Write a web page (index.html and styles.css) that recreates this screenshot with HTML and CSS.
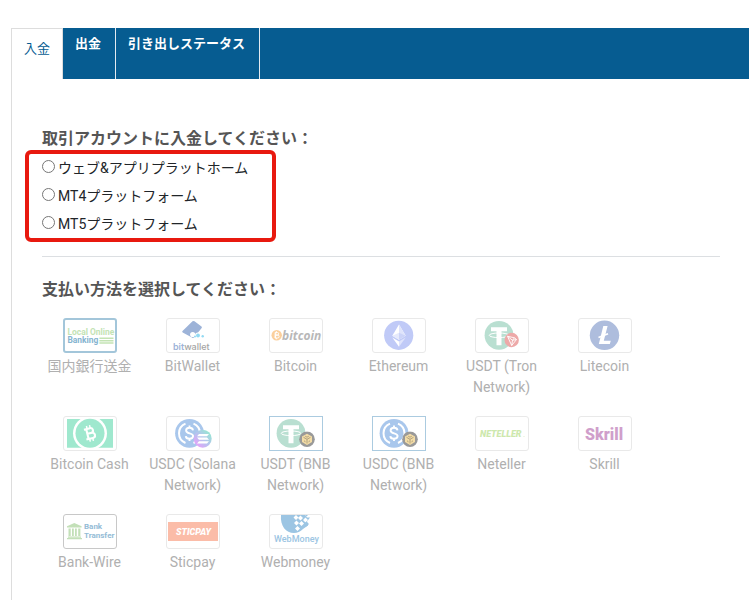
FILE: index.html
```html
<!DOCTYPE html>
<html lang="ja">
<head>
<meta charset="utf-8">
<meta name="viewport" content="width=device-width, initial-scale=1">
<title>入金</title>
<link rel="stylesheet" href="styles.css">
</head>
<body>
<svg class="defs" aria-hidden="true">
  <defs>
    <linearGradient id="sol" x1="0" y1="1" x2="1" y2="0"><stop offset="0.1" stop-color="#e9a0fb"/><stop offset="0.5" stop-color="#b5c3ee"/><stop offset="0.9" stop-color="#95ead0"/></linearGradient>
    <symbol id="tether" viewBox="0 0 30 30">
      <circle cx="15" cy="15" r="14.4" fill="#b9dfd1"/>
      <path d="M7 7h16v4h-5.500v14h-5V11H7z" fill="#fff"/>
      <ellipse cx="15" cy="15" rx="9.800" ry="2.300" fill="none" stroke="#fff" stroke-width="1"/>
    </symbol>
    <symbol id="usdc" viewBox="0 0 30 30">
      <circle cx="15" cy="15" r="14.4" fill="#a9c7ec"/>
      <path d="M11 5.300a10.500 10.500 0 0 0 0 19.400M19 5.300a10.500 10.500 0 0 1 0 19.400" fill="none" stroke="#fff" stroke-width="2"/>
      <path d="M18.500 12c-.3-1.800-1.700-2.500-3.500-2.500-2 0-3.400 1-3.400 2.600 0 3.800 7 2 7 5.700 0 1.700-1.500 2.700-3.600 2.700s-3.600-.9-3.700-2.700M15 7.200v2.300M15 20.500v2.300" fill="none" stroke="#fff" stroke-width="1.900"/>
    </symbol>
    <symbol id="bnb" viewBox="0 0 16 16">
      <circle cx="8" cy="8" r="7.800" fill="#999"/>
      <path d="M8 2.400l5 2.800v5.600l-5 2.800-5-2.800V5.200z" fill="#f3dca6"/>
      <path d="M4.500 6L8 8l3.500-2M8 8v4.200M5 9.500l1.500 1M11 9.500l-1.500 1M6.200 4.900L8 5.900l1.800-1" fill="none" stroke="#a99a78" stroke-width=".9"/>
    </symbol>
  </defs>
</svg>

<nav class="tabs">
  <a class="tab tab-active" href="#deposit" aria-current="page">入金</a>
  <a class="tab" href="#withdraw">出金</a>
  <a class="tab" href="#status">引き出しステータス</a>
</nav>

<main class="panel" id="deposit">
  <h2 class="title" id="account-title">取引アカウントに入金してください：</h2>
  <div class="platforms" role="radiogroup" aria-labelledby="account-title">
    <label class="platform"><input class="radio" type="radio" name="platform">ウェブ&amp;アプリプラットホーム</label>
    <label class="platform"><input class="radio" type="radio" name="platform">MT4プラットフォーム</label>
    <label class="platform"><input class="radio" type="radio" name="platform">MT5プラットフォーム</label>
  </div>
  <hr class="divider">
  <h2 class="title">支払い方法を選択してください：</h2>
  <div class="methods">
    <button class="method" type="button">
      <svg class="logo logo-blue" viewBox="1 1 52 33" aria-hidden="true">
        <text class="lt-roboto" x="3" y="17" font-size="9" font-weight="700" fill="#c3e3b4">Local Online</text>
        <text class="lt-roboto" x="3" y="26" font-size="9" font-weight="700" fill="#85b4d0">Banking</text>
        <path d="M37 20.500h15M37 23h15M37 25.500h15" stroke="#c3e3b4" stroke-width="1.600"/>
      </svg>
      <span>国内銀行送金</span>
    </button>
    <button class="method" type="button">
      <svg class="logo" viewBox="1 1 52 33" aria-hidden="true">
        <path d="M26.500 3.300q1-.8 2 0l7 5.200q.8.700.2 1.500l-7.800 9.500q-.7.700-1.500.2L16.700 14.400q-1-.7-.2-1.500z" fill="#9db3d8"/>
        <circle cx="26.700" cy="16.500" r="2.600" fill="#fff"/><circle cx="32" cy="17.500" r="3" fill="#fff"/>
        <circle cx="32" cy="17.500" r="1.900" fill="#93daf3"/><circle cx="36.700" cy="18.200" r="1.200" fill="#93daf3"/><circle cx="29" cy="18.500" r="1" fill="#93daf3"/>
        <text class="lt-inter" x="7" y="32" font-size="9" font-weight="600" fill="#9db3d8">bit<tspan font-weight="500" fill="#a5a5a5">wallet</tspan></text>
      </svg>
      <span>BitWallet</span>
    </button>
    <button class="method" type="button">
      <svg class="logo" viewBox="1 1 52 33" aria-hidden="true">
        <circle cx="7.700" cy="17.300" r="5.200" fill="#fbcf9c"/>
        <path d="M6.200 14.500h2.200a1.300 1.300 0 0 1 0 2.600H6.500h2.200a1.400 1.400 0 0 1 0 2.900H6zM6.900 14.500L6.400 20M7.400 13.200v1.300M7.300 20v1.300" fill="none" stroke="#fff" stroke-width="1"/>
        <text class="lt-open" x="13" y="22" font-size="12" font-weight="700" font-style="italic" fill="#b8b8b8">bitcoin</text>
      </svg>
      <span>Bitcoin</span>
    </button>
    <button class="method" type="button">
      <svg class="logo" viewBox="1 1 52 33" aria-hidden="true">
        <circle cx="26.700" cy="17.300" r="14.600" fill="#c0caf7"/>
        <path d="M27 6.500l6.700 11.300L27 21.800l-6.700-4z" fill="#fff"/><path d="M27 6.500l6.700 11.300L27 21.800z" fill="#dfe4fb"/><path d="M27 14.800l6.700 3L27 21.800z" fill="#ccd4f8"/><path d="M27 14.800l-6.700 3 6.700 4z" fill="#e6eafc"/>
        <path d="M20.300 19.500l6.700 4v5.300z" fill="#fff"/><path d="M33.700 19.500l-6.700 4v5.300z" fill="#dfe4fb"/>
      </svg>
      <span>Ethereum</span>
    </button>
    <button class="method" type="button">
      <svg class="logo" viewBox="1 1 52 33" aria-hidden="true">
        <use href="#tether" x="9" y="2.300" width="30" height="30"/>
        <circle cx="36.700" cy="22" r="7.200" fill="#eda9a8"/>
        <path d="M32.500 18.300l7 1.500 2 1.700-4.800 6zM32.500 18.300l5 4 4-.8M37.500 22.300l2-2.500M37.500 22.300l-.8 5.200" fill="none" stroke="#fff" stroke-width=".9" stroke-linejoin="round"/>
      </svg>
      <span>USDT (Tron Network)</span>
    </button>
    <button class="method" type="button">
      <svg class="logo" viewBox="1 1 52 33" aria-hidden="true">
        <circle cx="26.500" cy="17.300" r="14.700" fill="#aebddd"/>
        <path d="M25.300 8h4.300l-3.800 14.700h7l-1 3.300H20.800z" fill="#fff"/>
        <path d="M20.500 19.500l9.500-3.800" stroke="#fff" stroke-width="1.700"/>
      </svg>
      <span>Litecoin</span>
    </button>
    <button class="method" type="button">
      <svg class="logo" viewBox="1 1 52 33" aria-hidden="true">
        <path d="M4 3h46v28.700H4z" fill="#9fe8ce"/><circle cx="27" cy="17.300" r="17" fill="#fff"/><circle cx="27" cy="17.300" r="14.500" fill="#9fe8ce"/>
        <g transform="rotate(-14 27 17.300)" fill="none" stroke="#fff" stroke-width="2.100"><path d="M22 12.300h6.200a2.400 2.400 0 0 1 0 4.900H24.500h4.300a2.600 2.600 0 0 1 0 5.300H22M24.300 12.300v10.200"/><path d="M25.300 9.300v3M28.500 9.300v3M25.300 22.500v3M28.500 22.500v3" stroke-width="1.500"/></g>
      </svg>
      <span>Bitcoin Cash</span>
    </button>
    <button class="method" type="button">
      <svg class="logo" viewBox="1 1 52 33" aria-hidden="true">
        <use href="#usdc" x="8.500" y="2.300" width="30" height="30"/>
        <circle cx="36.700" cy="22.700" r="9" fill="url(#sol)"/>
        <path d="M33 18h10l-2 2.300H31zM31 21.500h10l2 2.300H33zM33 25.200h10l-2 2.300H31z" fill="#fff"/>
      </svg>
      <span>USDC (Solana Network)</span>
    </button>
    <button class="method" type="button">
      <svg class="logo logo-pale" viewBox="1 1 52 33" aria-hidden="true">
        <use href="#tether" x="7" y="2.300" width="30" height="30"/><use href="#bnb" x="30" y="15.300" width="16" height="16"/>
      </svg>
      <span>USDT (BNB Network)</span>
    </button>
    <button class="method" type="button">
      <svg class="logo logo-pale" viewBox="1 1 52 33" aria-hidden="true">
        <use href="#usdc" x="7" y="2.300" width="30" height="30"/><use href="#bnb" x="30" y="15.300" width="16" height="16"/>
      </svg>
      <span>USDC (BNB Network)</span>
    </button>
    <button class="method" type="button">
      <svg class="logo" viewBox="1 1 52 33" aria-hidden="true">
        <text class="lt-roboto" x="5" y="21" font-size="9" font-weight="900" font-style="italic" fill="#cde8ad">NETELLER</text>
        <circle cx="49" cy="20.500" r=".6" fill="#dff0cb"/>
      </svg>
      <span>Neteller</span>
    </button>
    <button class="method" type="button">
      <svg class="logo" viewBox="1 1 52 33" aria-hidden="true">
        <text class="lt-roboto" x="7" y="24" font-size="16" font-weight="900" fill="#d09fcb">Skrill</text>
      </svg>
      <span>Skrill</span>
    </button>
    <button class="method" type="button">
      <svg class="logo logo-grey" viewBox="1 1 52 33" aria-hidden="true">
        <path d="M4 13.500v-1.200l7.300-3.300 7.300 3.300v1.200zM5.500 14.500h2.200v7.500H5.500zM9 14.500h1.800v7.500H9zM12 14.500h1.800v7.500H12zM15.200 14.500h2.200v7.500h-2.200zM5 22.500h13v1.200H5zM4 24h15v1.200H4z" fill="#c3e0b8"/>
        <text class="lt-roboto" x="21" y="15" font-size="8" font-weight="700" fill="#94bcd6">Bank</text>
        <text class="lt-roboto" x="21" y="24" font-size="8" font-weight="700" fill="#94bcd6">Transfer</text>
      </svg>
      <span>Bank-Wire</span>
    </button>
    <button class="method" type="button">
      <svg class="logo" viewBox="1 1 52 33" aria-hidden="true">
        <path d="M2 8h50v19H2z" fill="#fbbca8"/>
        <text class="lt-roboto" x="10" y="21" font-size="9" font-weight="900" font-style="italic" fill="#fff">STICPAY</text>
      </svg>
      <span>Sticpay</span>
    </button>
    <button class="method" type="button">
      <svg class="logo" viewBox="1 1 52 33" aria-hidden="true">
        <path d="M12 1h24l2 2.500 3 0-3 4 1 4-5 3.500q-4 4-9 4C17 19 11 12 12 1z" fill="#9cc5e3"/>
        <path d="M27 1l2.500 2.500L27 6l-2.500-2.500zM31.500 1.500L34 4l-2.500 2.500L29 4zM27.500 6.500L30 9l-2.500 2.500L25 9zM32.500 7L35 9.500 32.500 12 30 9.500zM28.500 12l2.500 2.500-2.500 2.500-2.500-2.500zM36.500 3.500L39 6l-2.500 2.500L34 6z" fill="#fff"/>
        <path d="M37.500 7.500l2.500 2.500-2.500 2.500L35 10zM36 1l1.500 1.500L39 1z" fill="#9cc5e3"/>
        <text class="lt-roboto" x="5" y="28" font-size="9" font-weight="500" fill="#9cc5e3">WebMoney</text>
      </svg>
      <span>Webmoney</span>
    </button>
  </div>
</main>
</body>
</html>
```
FILE: styles.css
```css
* { box-sizing: border-box; }

body {
  margin: 28px 0 0 11px;
  background: #fff;
  color: #212529;
  font: 14px/21px Roboto, "Noto Sans CJK JP", sans-serif;
  overflow-x: hidden;
}

.defs { position: absolute; width: 0; height: 0; }

.tabs {
  display: flex;
  background: #065c91;
}

.tab {
  padding: 5px 14px 25px 12px;
  border-right: 1px solid #e4eaf0;
  color: #fff;
  font-size: 13px;
  font-weight: 700;
  text-decoration: none;
}

.tab-active {
  padding: 9px 12px 20px;
  border: 1px solid #ddd;
  border-width: 1px 1px 0;
  background: #fff;
  color: #065c91;
  font-weight: 400;
}

.panel {
  min-height: 521px;
  padding: 48px 29px 0 30px;
  border-left: 1px solid #ddd;
}

.title {
  margin: 0;
  color: #555;
  font-size: 16px;
  font-weight: 700;
  line-height: 23px;
}

.platforms {
  display: flex;
  flex-direction: column;
  width: 251px;
  margin-left: -17px;
  padding: 0 13px;
  border: 4px solid #e8190f;
  border-radius: 6px;
}

.platform {
  display: flex;
  align-items: center;
  gap: 3px;
  height: 28px;
}

.radio {
  width: 13px;
  height: 13px;
  margin: 0 0 4px;
}

.divider {
  height: 1px;
  margin: 14px 0 21px;
  border: 0;
  background: #dcdfe2;
}

.methods {
  display: grid;
  grid-template-columns: repeat(auto-fill, 103px);
  row-gap: 18px;
  margin: 17px 0 0 -4px;
  max-width: 618px;
}

.method {
  display: flex;
  flex-direction: column;
  align-items: center;
  gap: 3px;
  min-height: 80px;
  padding: 0 6px;
  border: 0;
  background: none;
  color: #b0b0b0;
  font: inherit;
  cursor: pointer;
}

.logo {
  width: 54px;
  height: 35px;
  border: 1px solid #e9e9e9;
  border-radius: 3px;
}

.logo-blue { border: 2px solid #a3c6da; }
.logo-pale { border-color: #abcbe0; border-radius: 0; }
.logo-grey { border-color: #c8c8c8; }

.lt-roboto { font-family: Roboto, sans-serif; }
.lt-open { font-family: "Open Sans", sans-serif; }
.lt-inter { font-family: Inter, sans-serif; }
```
